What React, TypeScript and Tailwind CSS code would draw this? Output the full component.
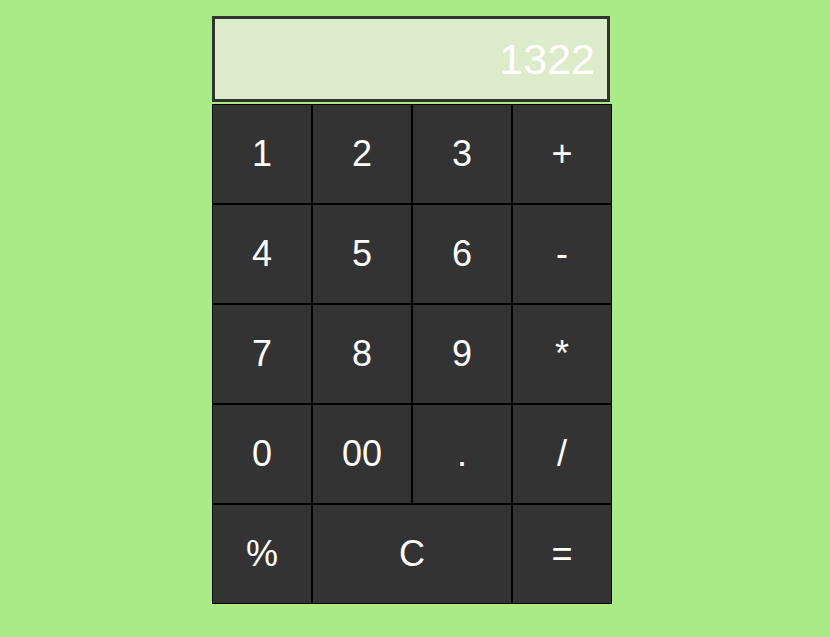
import React from 'react';

const keys: { label: string; wide?: boolean }[] = [
  { label: '1' }, { label: '2' }, { label: '3' }, { label: '+' },
  { label: '4' }, { label: '5' }, { label: '6' }, { label: '-' },
  { label: '7' }, { label: '8' }, { label: '9' }, { label: '*' },
  { label: '0' }, { label: '00' }, { label: '.' }, { label: '/' },
  { label: '%' }, { label: 'C', wide: true }, { label: '=' },
];

export default function App() {
  return (
    <div
      className="min-h-[637px] w-full bg-[#a9ec86] pt-4"
      style={{ fontFamily: '"Liberation Sans", Arial, sans-serif' }}
    >
      <div className="ml-[212px] w-[400px]">
        {/* display */}
        <div className="w-[398px] h-[86px] border-[3px] border-[#333] bg-[#dcebc9] flex items-center justify-end pr-3 mb-[2px]">
          <span className="text-[43px] text-white leading-none">1322</span>
        </div>

        {/* keypad */}
        <div className="grid grid-cols-4">
          {keys.map((k) => (
            <button
              key={k.label}
              className={`h-[100px] border border-black bg-[#333] text-white text-[36px] flex items-center justify-center ${
                k.wide ? 'col-span-2' : ''
              }`}
            >
              {k.label}
            </button>
          ))}
        </div>
      </div>
    </div>
  );
}
